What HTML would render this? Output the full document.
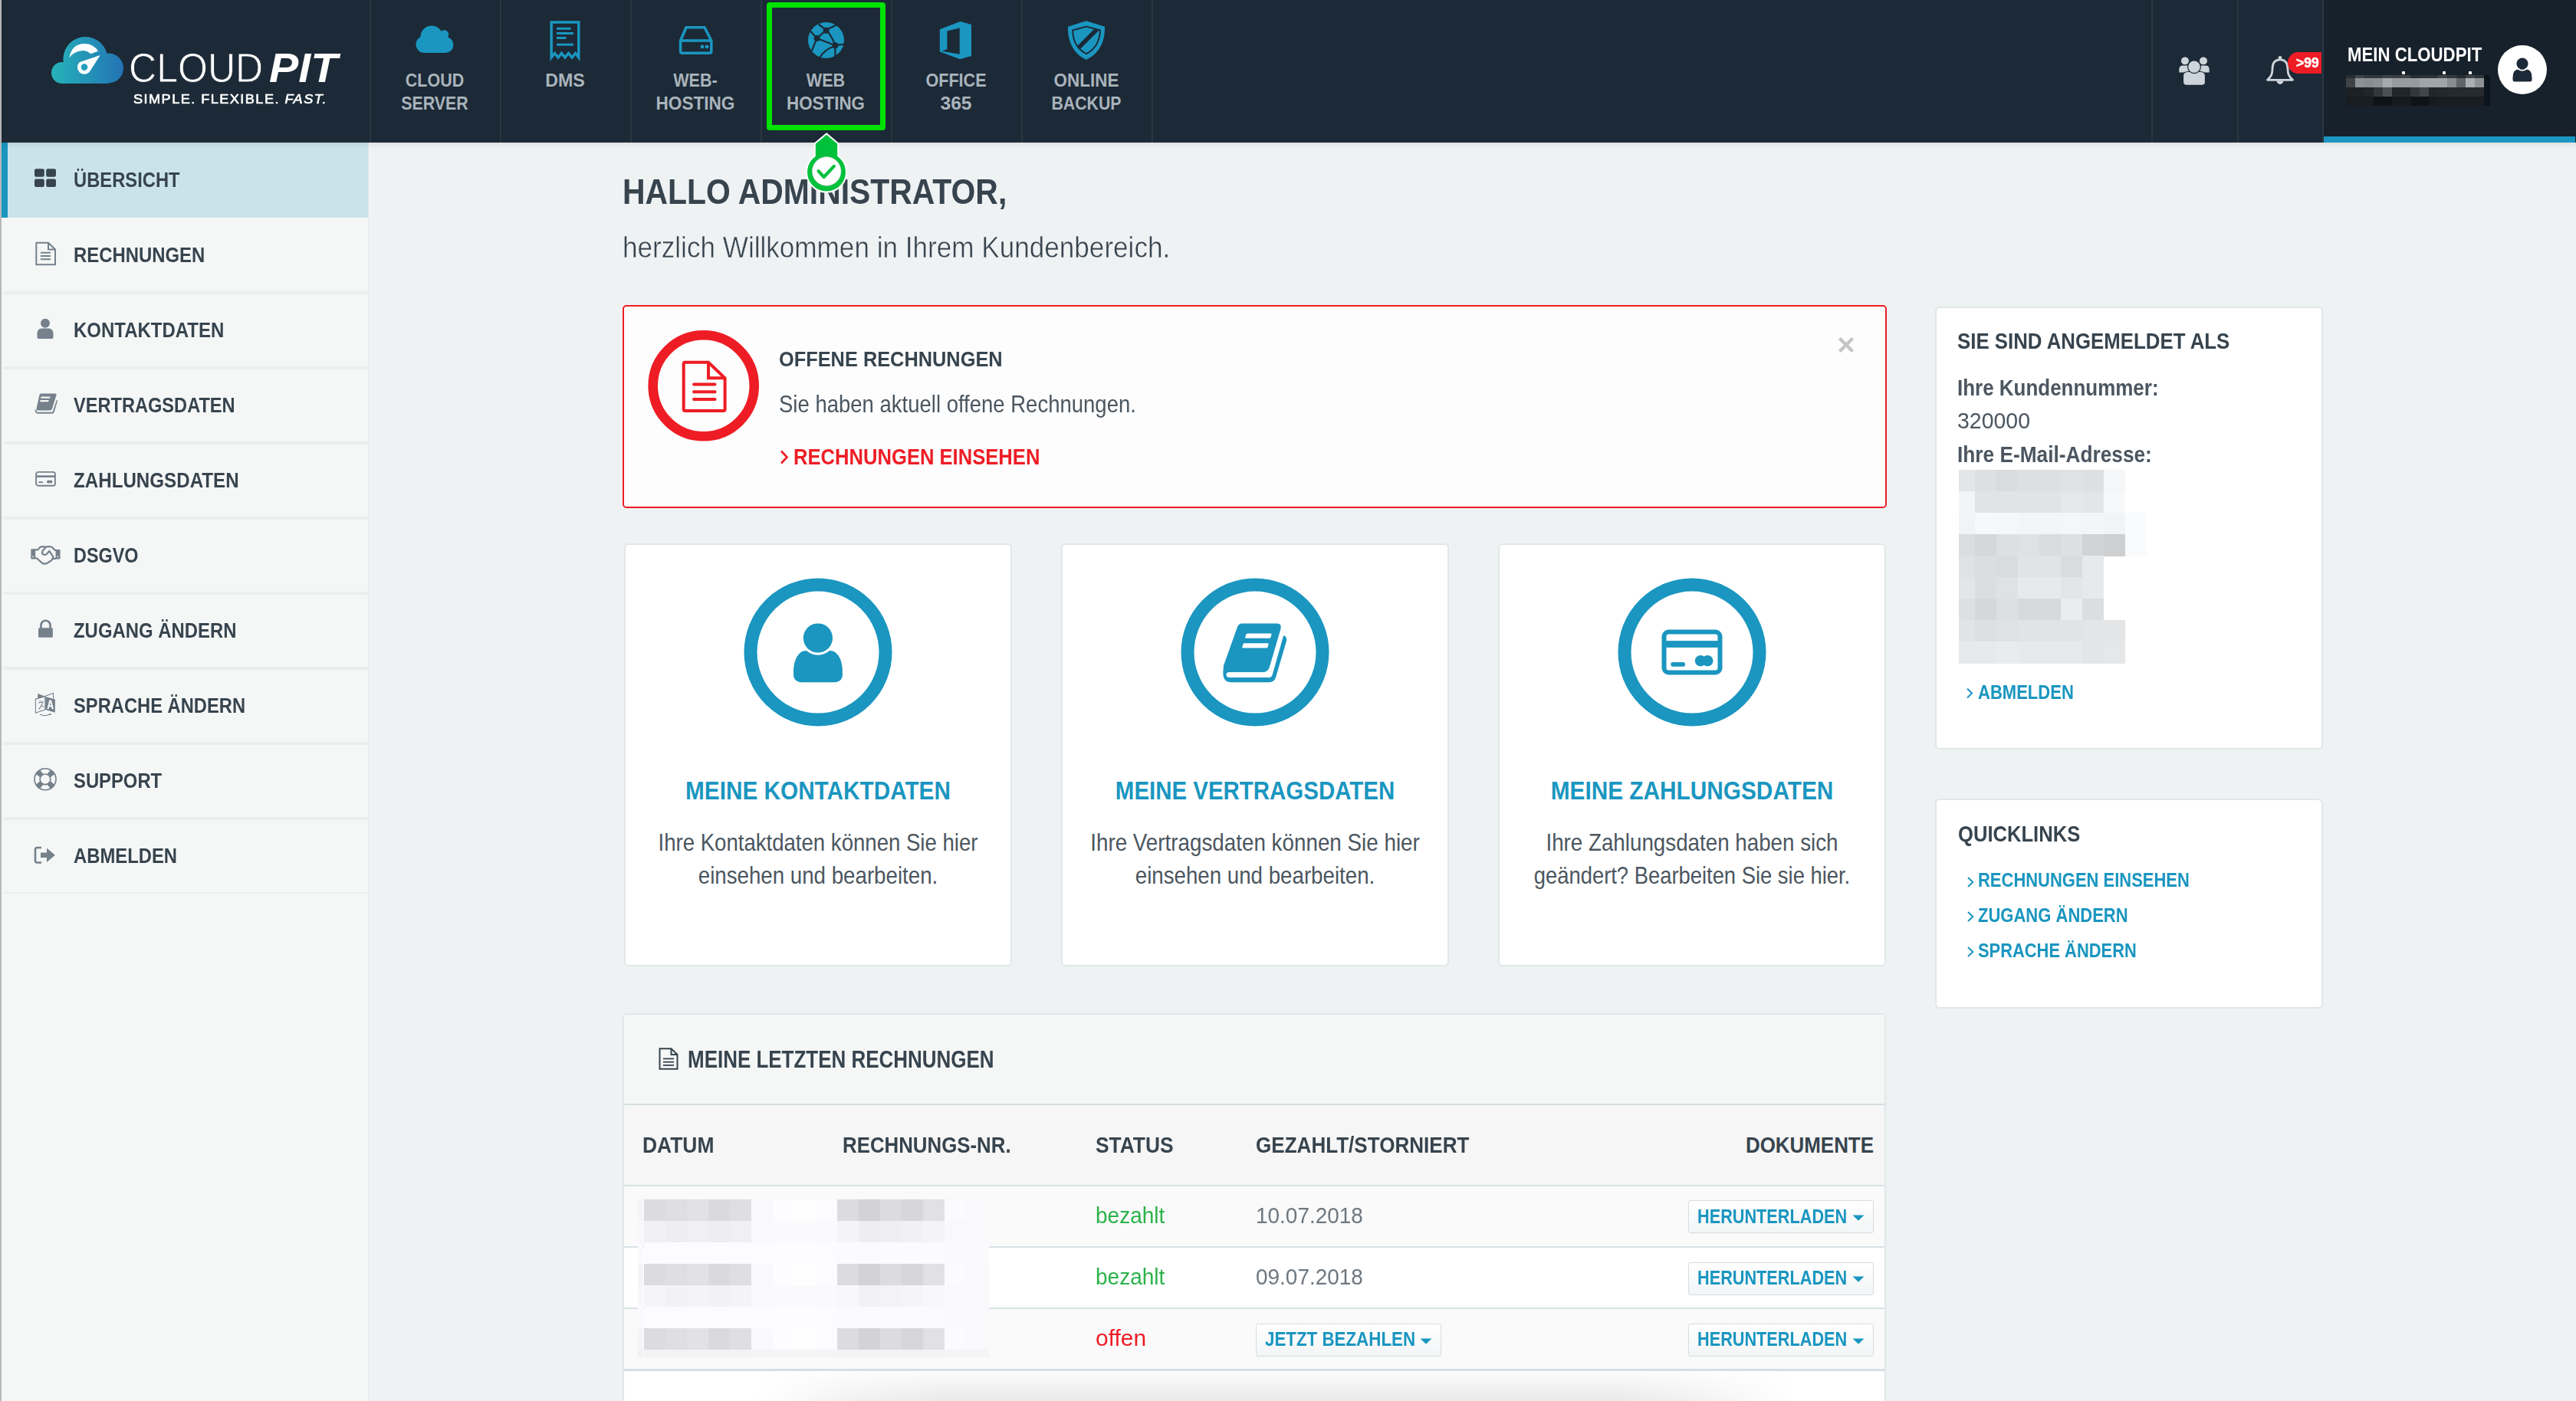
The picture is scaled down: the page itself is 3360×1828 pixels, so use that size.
<!DOCTYPE html><html><head><meta charset="utf-8"><style>
html,body{margin:0;padding:0}
body{width:3360px;height:1828px;overflow:hidden;position:relative;background:#eff2f3;font-family:"Liberation Sans",sans-serif}
.t{position:absolute;white-space:nowrap;line-height:1}
.t span{display:inline-block}
</style></head><body>
<div style="position:absolute;left:0px;top:0px;width:3360px;height:186px;background:#1c2936"></div>
<div style="position:absolute;left:3030px;top:0px;width:330px;height:186px;background:#17212b"></div>
<div style="position:absolute;left:3030px;top:178px;width:329px;height:8px;background:#1a96c0"></div>
<div style="position:absolute;left:482px;top:0px;width:2px;height:186px;background:#2a3641"></div>
<div style="position:absolute;left:652px;top:0px;width:2px;height:186px;background:#2a3641"></div>
<div style="position:absolute;left:822px;top:0px;width:2px;height:186px;background:#2a3641"></div>
<div style="position:absolute;left:992px;top:0px;width:2px;height:186px;background:#2a3641"></div>
<div style="position:absolute;left:1162px;top:0px;width:2px;height:186px;background:#2a3641"></div>
<div style="position:absolute;left:1332px;top:0px;width:2px;height:186px;background:#2a3641"></div>
<div style="position:absolute;left:1502px;top:0px;width:2px;height:186px;background:#2a3641"></div>
<div style="position:absolute;left:2806px;top:0px;width:2px;height:186px;background:#2a3641"></div>
<div style="position:absolute;left:2918px;top:0px;width:2px;height:186px;background:#2a3641"></div>
<div style="position:absolute;left:3029px;top:0px;width:2px;height:186px;background:#2a3641"></div>
<svg style="position:absolute;left:60px;top:40px" width="110" height="75" viewBox="0 0 110 75"><defs><linearGradient id="lg" gradientUnits="userSpaceOnUse" x1="7" y1="0" x2="101" y2="0"><stop offset="0" stop-color="#25b3ba"/><stop offset="1" stop-color="#2373b4"/></linearGradient></defs>
<g fill="url(#lg)"><circle cx="21" cy="55" r="14"/><circle cx="51.4" cy="37" r="29"/><circle cx="81.5" cy="49" r="19.5"/><rect x="21" y="45" width="60.5" height="24"/></g>
<path d="M30.2,35.3 Q34,17 50,17 Q62,17 68,26.8 L58.5,30.2 Q52,25 46,26.2 Q36,27.5 30.2,35.3 Z" fill="#fff"/>
<path d="M70.7,32.1 L56.7,54 A9.1,9.1 0 1 1 43.5,41.2 Z" fill="#fff"/>
<circle cx="50" cy="47.6" r="4.3" fill="#239fbd"/></svg>
<div class="t" style="left:168.00px;top:61.49px;font-size:54.00px;font-weight:normal;color:#ffffff;-webkit-text-stroke:0.9px #1c2936;"><span id="t1" style="transform:scaleX(0.9271);transform-origin:0 0">CLOUD</span></div>
<div class="t" style="left:351.00px;top:61.49px;font-size:54.00px;font-weight:bold;color:#ffffff;"><span id="t2" style="transform:scaleX(1.0624);transform-origin:0 0"><i>PIT</i></span></div>
<div class="t" style="left:174.00px;top:121.43px;font-size:16.50px;font-weight:normal;color:#ffffff;letter-spacing:1.3px;-webkit-text-stroke:0.6px #fff;"><span id="t3" style="transform:scaleX(1.1010);transform-origin:0 0">SIMPLE. FLEXIBLE. <i>FAST.</i></span></div>
<div class="t" style="left:567.00px;top:93.06px;width:0;font-size:24.50px;font-weight:bold;color:#a9b4bc;"><span id="t4" style="transform:scaleX(0.8759) translateX(-50%);transform-origin:0 0">CLOUD</span></div>
<div class="t" style="left:567.00px;top:123.26px;width:0;font-size:24.50px;font-weight:bold;color:#a9b4bc;"><span id="t5" style="transform:scaleX(0.8719) translateX(-50%);transform-origin:0 0">SERVER</span></div>
<div class="t" style="left:737.00px;top:93.06px;width:0;font-size:24.50px;font-weight:bold;color:#a9b4bc;"><span id="t6" style="transform:scaleX(0.9491) translateX(-50%);transform-origin:0 0">DMS</span></div>
<div class="t" style="left:907.00px;top:93.06px;width:0;font-size:24.50px;font-weight:bold;color:#a9b4bc;"><span id="t7" style="transform:scaleX(0.8804) translateX(-50%);transform-origin:0 0">WEB-</span></div>
<div class="t" style="left:907.00px;top:123.26px;width:0;font-size:24.50px;font-weight:bold;color:#a9b4bc;"><span id="t8" style="transform:scaleX(0.9216) translateX(-50%);transform-origin:0 0">HOSTING</span></div>
<div class="t" style="left:1077.00px;top:93.06px;width:0;font-size:24.50px;font-weight:bold;color:#a9b4bc;"><span id="t9" style="transform:scaleX(0.8800) translateX(-50%);transform-origin:0 0">WEB</span></div>
<div class="t" style="left:1077.00px;top:123.26px;width:0;font-size:24.50px;font-weight:bold;color:#a9b4bc;"><span id="t10" style="transform:scaleX(0.9126) translateX(-50%);transform-origin:0 0">HOSTING</span></div>
<div class="t" style="left:1247.00px;top:93.06px;width:0;font-size:24.50px;font-weight:bold;color:#a9b4bc;"><span id="t11" style="transform:scaleX(0.8804) translateX(-50%);transform-origin:0 0">OFFICE</span></div>
<div class="t" style="left:1247.00px;top:123.26px;width:0;font-size:24.50px;font-weight:bold;color:#a9b4bc;"><span id="t12" style="transform:scaleX(1.0040) translateX(-50%);transform-origin:0 0">365</span></div>
<div class="t" style="left:1417.00px;top:93.06px;width:0;font-size:24.50px;font-weight:bold;color:#a9b4bc;"><span id="t13" style="transform:scaleX(0.9156) translateX(-50%);transform-origin:0 0">ONLINE</span></div>
<div class="t" style="left:1417.00px;top:123.26px;width:0;font-size:24.50px;font-weight:bold;color:#a9b4bc;"><span id="t14" style="transform:scaleX(0.8682) translateX(-50%);transform-origin:0 0">BACKUP</span></div>
<svg style="position:absolute;left:540px;top:30px" width="55" height="42" viewBox="0 0 55 42"><g fill="#1a96c0"><circle cx="23" cy="18" r="14.5"/><circle cx="39.5" cy="15" r="5.8"/><circle cx="13.5" cy="28" r="11"/><circle cx="41" cy="28.5" r="10.5"/><rect x="13.5" y="20" width="27.5" height="19"/></g></svg>
<svg style="position:absolute;left:715px;top:25px" width="45" height="56" viewBox="0 0 45 56"><g fill="none" stroke="#1a96c0" stroke-width="3.5"><path d="M4.2,50 L4.2,4 L39.8,4 L39.8,50 L35.5,44.5 L31,50 L26.5,44.5 L22,50 L17.5,44.5 L13,50 L8.5,44.5 Z"/></g><g fill="#1a96c0"><rect x="11" y="10.8" width="18.5" height="3"/><rect x="11" y="17" width="22" height="3"/><rect x="11" y="23" width="12.5" height="3"/><rect x="11" y="31.7" width="22" height="3"/></g></svg>
<svg style="position:absolute;left:883px;top:31px" width="50" height="44" viewBox="0 0 50 44"><g fill="none" stroke="#1a96c0" stroke-width="3.6" stroke-linejoin="round"><path d="M12,4.8 L36,4.8 L44.8,22 L44.8,36 Q44.8,38.3 42.5,38.3 L6.9,38.3 Q4.6,38.3 4.6,36 L4.6,22 Z"/><path d="M4.6,22 L44.8,22"/></g><g fill="#1a96c0"><circle cx="33" cy="30" r="2.4"/><circle cx="39" cy="30" r="2.4"/></g></svg>
<svg style="position:absolute;left:1050px;top:26px" width="54" height="54" viewBox="0 0 54 54"><circle cx="27.5" cy="26.5" r="23.5" fill="#1a96c0"/><g fill="none" stroke="#1c2936" stroke-width="2.2" stroke-linejoin="round"><path d="M17.5,5.5 L27.6,13.1 L41,6.5"/><path d="M27.6,13.1 L15.6,23.9 L6.5,14"/><path d="M15.6,23.9 L8.5,41"/><path d="M15.6,23.9 L39.4,33.2 L52,31.5"/><path d="M27.6,13.1 Q35,21 39.4,33.2 L39.4,51"/><path d="M38,34.5 Q26,38 18.5,50"/></g><g fill="#1c2936"><circle cx="27.6" cy="13.8" r="4"/><circle cx="15.6" cy="23.9" r="4"/><circle cx="39.4" cy="33.2" r="4"/></g></svg>
<svg style="position:absolute;left:1222px;top:25px" width="50" height="56" viewBox="0 0 50 56"><path fill="#1a96c0" d="M3.8,13.2 L30.6,3 L45,7 L45,47.9 L30.2,52.3 L3.8,42.6 Z"/><path fill="#1c2936" d="M13.4,15.4 L29.7,11.4 L29.7,45.7 L6.7,41.7 L13.4,39 Z"/></svg>
<svg style="position:absolute;left:1389px;top:24px" width="56" height="58" viewBox="0 0 56 58"><defs><clipPath id="shc"><path d="M27.9,10.6 L46,15.5 C45.5,30 40,40 27.9,46.2 C15.8,40 10.4,30 10.2,15.5 Z"/></clipPath></defs><path fill="#1a96c0" d="M27.8,3.2 L52,10.8 C52.5,30 45,46 27.8,54 C10.6,46 3.5,30 4,10.8 Z"/><path fill="none" stroke="#1c2936" stroke-width="1.9" stroke-linejoin="round" d="M27.9,10.6 L46,15.5 C45.5,30 40,40 27.9,46.2 C15.8,40 10.4,30 10.2,15.5 Z"/><path clip-path="url(#shc)" stroke="#1c2936" stroke-width="5.6" d="M47.3,8.8 L11.3,44.8"/></svg>
<svg style="position:absolute;left:2838px;top:70px" width="48" height="46" viewBox="0 0 48 46"><g fill="#cdd4da" stroke="#1c2936" stroke-width="1.2">
<circle cx="12" cy="9.4" r="5.6"/><circle cx="36" cy="9.4" r="5.6"/>
<path d="M3.8,20 Q4,14.8 9,14.8 L15,14.8 Q20,14.8 20,20 L20,25 L3.8,25 Q3.6,22 3.8,20 Z"/>
<path d="M28,20 Q28,14.8 33,14.8 L39,14.8 Q44,14.8 44.2,20 Q44.4,22 44.2,25 L28,25 Z"/>
<path d="M9.5,29 Q9.5,23.5 16,23.5 L32,23.5 Q38.5,23.5 38.5,29 L38.5,37 Q38.5,41.4 34,41.4 L14,41.4 Q9.5,41.4 9.5,37 Z"/>
<circle cx="24" cy="17.2" r="8.4"/></g></svg>
<svg style="position:absolute;left:2952px;top:70px" width="44" height="46" viewBox="0 0 44 46"><g fill="none" stroke="#cdd4da" stroke-width="2.8" stroke-linejoin="round"><path d="M22,7.8 C14.5,7.8 12,13 12,20 C12,26.5 10.5,29.5 5.5,34.3 L38.5,34.3 C33.5,29.5 32,26.5 32,20 C32,13 29.5,7.8 22,7.8 Z"/></g><path d="M17.6,35.5 A4.4,4.4 0 0 0 26.4,35.5 Z" fill="#cdd4da"/><circle cx="22" cy="5.3" r="2.3" fill="#cdd4da"/></svg>
<div style="position:absolute;left:2984px;top:67.8px;width:44px;height:28.2px;background:#ee1d25;border-radius:14px 0 0 14px;overflow:hidden"><div style="position:absolute;left:10.6px;top:4.2px;font-size:19px;font-weight:bold;color:#fff;line-height:1;white-space:nowrap;-webkit-text-stroke:0.5px #fff;transform:scaleX(0.92);transform-origin:0 0">&gt;99</div></div>
<div class="t" style="left:3061.60px;top:58.58px;font-size:25.30px;font-weight:bold;color:#ffffff;"><span id="t15" style="transform:scaleX(0.8779);transform-origin:0 0">MEIN CLOUDPIT</span></div>
<div style="position:absolute;left:3060px;top:97.8px;width:12px;height:3.8px;background:rgb(40,45,50)"></div>
<div style="position:absolute;left:3060px;top:101.6px;width:12px;height:12.4px;background:rgb(62,67,72)"></div>
<div style="position:absolute;left:3060px;top:114px;width:12px;height:12px;background:rgb(28,33,38)"></div>
<div style="position:absolute;left:3060px;top:126px;width:12px;height:12px;background:rgb(24,29,34)"></div>
<div style="position:absolute;left:3072px;top:97.8px;width:12px;height:3.8px;background:rgb(62,67,72)"></div>
<div style="position:absolute;left:3072px;top:101.6px;width:12px;height:12.4px;background:rgb(140,145,150)"></div>
<div style="position:absolute;left:3072px;top:114px;width:12px;height:12px;background:rgb(28,33,38)"></div>
<div style="position:absolute;left:3072px;top:126px;width:12px;height:12px;background:rgb(24,29,34)"></div>
<div style="position:absolute;left:3084px;top:97.8px;width:12px;height:3.8px;background:rgb(50,55,60)"></div>
<div style="position:absolute;left:3084px;top:101.6px;width:12px;height:12.4px;background:rgb(135,140,145)"></div>
<div style="position:absolute;left:3084px;top:114px;width:12px;height:12px;background:rgb(33,38,43)"></div>
<div style="position:absolute;left:3084px;top:126px;width:12px;height:12px;background:rgb(24,29,34)"></div>
<div style="position:absolute;left:3096px;top:97.8px;width:12px;height:3.8px;background:rgb(50,55,60)"></div>
<div style="position:absolute;left:3096px;top:101.6px;width:12px;height:12.4px;background:rgb(140,145,150)"></div>
<div style="position:absolute;left:3096px;top:114px;width:12px;height:12px;background:rgb(50,55,60)"></div>
<div style="position:absolute;left:3096px;top:126px;width:12px;height:12px;background:rgb(14,19,24)"></div>
<div style="position:absolute;left:3108px;top:97.8px;width:12px;height:3.8px;background:rgb(62,67,72)"></div>
<div style="position:absolute;left:3108px;top:101.6px;width:12px;height:12.4px;background:rgb(165,170,175)"></div>
<div style="position:absolute;left:3108px;top:114px;width:12px;height:12px;background:rgb(75,80,85)"></div>
<div style="position:absolute;left:3108px;top:126px;width:12px;height:12px;background:rgb(14,19,24)"></div>
<div style="position:absolute;left:3120px;top:97.8px;width:12px;height:3.8px;background:rgb(58,63,68)"></div>
<div style="position:absolute;left:3120px;top:101.6px;width:12px;height:12.4px;background:rgb(150,155,160)"></div>
<div style="position:absolute;left:3120px;top:114px;width:12px;height:12px;background:rgb(33,38,43)"></div>
<div style="position:absolute;left:3120px;top:126px;width:12px;height:12px;background:rgb(22,27,32)"></div>
<div style="position:absolute;left:3132px;top:97.8px;width:12px;height:3.8px;background:rgb(62,67,72)"></div>
<div style="position:absolute;left:3132px;top:101.6px;width:12px;height:12.4px;background:rgb(150,155,160)"></div>
<div style="position:absolute;left:3132px;top:114px;width:12px;height:12px;background:rgb(33,38,43)"></div>
<div style="position:absolute;left:3132px;top:126px;width:12px;height:12px;background:rgb(22,27,32)"></div>
<div style="position:absolute;left:3144px;top:97.8px;width:12px;height:3.8px;background:rgb(40,45,50)"></div>
<div style="position:absolute;left:3144px;top:101.6px;width:12px;height:12.4px;background:rgb(150,155,160)"></div>
<div style="position:absolute;left:3144px;top:114px;width:12px;height:12px;background:rgb(50,55,60)"></div>
<div style="position:absolute;left:3144px;top:126px;width:12px;height:12px;background:rgb(14,19,24)"></div>
<div style="position:absolute;left:3156px;top:97.8px;width:12px;height:3.8px;background:rgb(44,49,54)"></div>
<div style="position:absolute;left:3156px;top:101.6px;width:12px;height:12.4px;background:rgb(160,165,170)"></div>
<div style="position:absolute;left:3156px;top:114px;width:12px;height:12px;background:rgb(65,70,75)"></div>
<div style="position:absolute;left:3156px;top:126px;width:12px;height:12px;background:rgb(14,19,24)"></div>
<div style="position:absolute;left:3168px;top:97.8px;width:12px;height:3.8px;background:rgb(44,49,54)"></div>
<div style="position:absolute;left:3168px;top:101.6px;width:12px;height:12.4px;background:rgb(160,165,170)"></div>
<div style="position:absolute;left:3168px;top:114px;width:12px;height:12px;background:rgb(33,38,43)"></div>
<div style="position:absolute;left:3168px;top:126px;width:12px;height:12px;background:rgb(22,27,32)"></div>
<div style="position:absolute;left:3180px;top:97.8px;width:12px;height:3.8px;background:rgb(62,67,72)"></div>
<div style="position:absolute;left:3180px;top:101.6px;width:12px;height:12.4px;background:rgb(160,165,170)"></div>
<div style="position:absolute;left:3180px;top:114px;width:12px;height:12px;background:rgb(35,40,45)"></div>
<div style="position:absolute;left:3180px;top:126px;width:12px;height:12px;background:rgb(24,29,34)"></div>
<div style="position:absolute;left:3192px;top:97.8px;width:12px;height:3.8px;background:rgb(50,55,60)"></div>
<div style="position:absolute;left:3192px;top:101.6px;width:12px;height:12.4px;background:rgb(135,140,145)"></div>
<div style="position:absolute;left:3192px;top:114px;width:12px;height:12px;background:rgb(37,42,47)"></div>
<div style="position:absolute;left:3192px;top:126px;width:12px;height:12px;background:rgb(24,29,34)"></div>
<div style="position:absolute;left:3204px;top:97.8px;width:12px;height:3.8px;background:rgb(40,45,50)"></div>
<div style="position:absolute;left:3204px;top:101.6px;width:12px;height:12.4px;background:rgb(95,100,105)"></div>
<div style="position:absolute;left:3204px;top:114px;width:12px;height:12px;background:rgb(37,42,47)"></div>
<div style="position:absolute;left:3204px;top:126px;width:12px;height:12px;background:rgb(24,29,34)"></div>
<div style="position:absolute;left:3216px;top:97.8px;width:12px;height:3.8px;background:rgb(62,67,72)"></div>
<div style="position:absolute;left:3216px;top:101.6px;width:12px;height:12.4px;background:rgb(170,175,180)"></div>
<div style="position:absolute;left:3216px;top:114px;width:12px;height:12px;background:rgb(37,42,47)"></div>
<div style="position:absolute;left:3216px;top:126px;width:12px;height:12px;background:rgb(24,29,34)"></div>
<div style="position:absolute;left:3228px;top:97.8px;width:12px;height:3.8px;background:rgb(50,55,60)"></div>
<div style="position:absolute;left:3228px;top:101.6px;width:12px;height:12.4px;background:rgb(140,145,150)"></div>
<div style="position:absolute;left:3228px;top:114px;width:12px;height:12px;background:rgb(37,42,47)"></div>
<div style="position:absolute;left:3228px;top:126px;width:12px;height:12px;background:rgb(24,29,34)"></div>
<div style="position:absolute;left:3240px;top:97.8px;width:8px;height:40px;background:#0c141d"></div>
<div style="position:absolute;left:3132.5px;top:93px;width:4px;height:4px;background:#fff;border-radius:1px"></div>
<div style="position:absolute;left:3186px;top:93px;width:4px;height:4px;background:#fff;border-radius:1px"></div>
<div style="position:absolute;left:3219.5px;top:93px;width:4px;height:4px;background:#fff;border-radius:1px"></div>
<svg style="position:absolute;left:3258px;top:59px" width="64" height="64" viewBox="0 0 64 64"><circle cx="32" cy="32" r="32" fill="#fff"/><circle cx="32" cy="24" r="7.6" fill="#1c2936"/><path fill="#1c2936" d="M19.5,42 Q19.5,31.5 27,31.5 L37,31.5 Q44.5,31.5 44.5,42 L44.5,45 Q44.5,47.5 42,47.5 L22,47.5 Q19.5,47.5 19.5,45 Z"/><circle cx="32" cy="24" r="9" fill="none" stroke="#fff" stroke-width="1.4"/></svg>
<div style="position:absolute;left:0px;top:186px;width:480px;height:1642px;background:#f5f7f7"></div>
<div style="position:absolute;left:480px;top:186px;width:1px;height:1642px;background:#e1e6e8"></div>
<div style="position:absolute;left:0px;top:0px;width:2px;height:1828px;background:#b9b9b9"></div>
<div style="position:absolute;left:2px;top:186px;width:478px;height:98px;background:#cae3ea"></div>
<div style="position:absolute;left:2px;top:186px;width:8px;height:98px;background:#1a96c0"></div>
<div style="position:absolute;left:4px;top:380px;width:476px;height:4px;background:#ebeeed"></div>
<div style="position:absolute;left:4px;top:478px;width:476px;height:4px;background:#ebeeed"></div>
<div style="position:absolute;left:4px;top:576px;width:476px;height:4px;background:#ebeeed"></div>
<div style="position:absolute;left:4px;top:674px;width:476px;height:4px;background:#ebeeed"></div>
<div style="position:absolute;left:4px;top:772px;width:476px;height:4px;background:#ebeeed"></div>
<div style="position:absolute;left:4px;top:870px;width:476px;height:4px;background:#ebeeed"></div>
<div style="position:absolute;left:4px;top:968px;width:476px;height:4px;background:#ebeeed"></div>
<div style="position:absolute;left:4px;top:1066px;width:476px;height:4px;background:#ebeeed"></div>
<div style="position:absolute;left:4px;top:1164px;width:476px;height:2px;background:#edf0f0"></div>
<div style="position:absolute;left:2px;top:186px;width:3358px;height:8px;background:linear-gradient(rgba(0,0,0,0.07),rgba(0,0,0,0))"></div>
<div class="t" style="left:95.50px;top:220.72px;font-size:27.50px;font-weight:bold;color:#37444e;"><span id="t16" style="transform:scaleX(0.8636);transform-origin:0 0">ÜBERSICHT</span></div>
<div class="t" style="left:95.50px;top:318.72px;font-size:27.50px;font-weight:bold;color:#37444e;"><span id="t17" style="transform:scaleX(0.8693);transform-origin:0 0">RECHNUNGEN</span></div>
<div class="t" style="left:95.50px;top:416.72px;font-size:27.50px;font-weight:bold;color:#37444e;"><span id="t18" style="transform:scaleX(0.8719);transform-origin:0 0">KONTAKTDATEN</span></div>
<div class="t" style="left:95.50px;top:514.72px;font-size:27.50px;font-weight:bold;color:#37444e;"><span id="t19" style="transform:scaleX(0.8581);transform-origin:0 0">VERTRAGSDATEN</span></div>
<div class="t" style="left:95.50px;top:612.72px;font-size:27.50px;font-weight:bold;color:#37444e;"><span id="t20" style="transform:scaleX(0.8784);transform-origin:0 0">ZAHLUNGSDATEN</span></div>
<div class="t" style="left:95.50px;top:710.72px;font-size:27.50px;font-weight:bold;color:#37444e;"><span id="t21" style="transform:scaleX(0.8509);transform-origin:0 0">DSGVO</span></div>
<div class="t" style="left:95.50px;top:808.72px;font-size:27.50px;font-weight:bold;color:#37444e;"><span id="t22" style="transform:scaleX(0.8696);transform-origin:0 0">ZUGANG ÄNDERN</span></div>
<div class="t" style="left:95.50px;top:906.72px;font-size:27.50px;font-weight:bold;color:#37444e;"><span id="t23" style="transform:scaleX(0.8624);transform-origin:0 0">SPRACHE ÄNDERN</span></div>
<div class="t" style="left:95.50px;top:1004.72px;font-size:27.50px;font-weight:bold;color:#37444e;"><span id="t24" style="transform:scaleX(0.8660);transform-origin:0 0">SUPPORT</span></div>
<div class="t" style="left:95.50px;top:1102.72px;font-size:27.50px;font-weight:bold;color:#37444e;"><span id="t25" style="transform:scaleX(0.8669);transform-origin:0 0">ABMELDEN</span></div>
<svg style="position:absolute;left:44px;top:219px" width="30" height="26" viewBox="0 0 30 26"><g fill="#37444e"><rect x="1" y="1.3" width="12.8" height="10.5" rx="2.2"/><rect x="16.2" y="1.3" width="12.8" height="10.5" rx="2.2"/><rect x="1" y="14.5" width="12.8" height="10.5" rx="2.2"/><rect x="16.2" y="14.5" width="12.8" height="10.5" rx="2.2"/></g></svg>
<svg style="position:absolute;left:44px;top:314px" width="32" height="34" viewBox="0 0 32 34"><g fill="none" stroke="#75818b" stroke-width="2" stroke-linejoin="round"><path d="M3.3,2.7 L19,2.7 L28,11.5 L28,31.3 L3.3,31.3 Z"/><path d="M19,2.7 L19,11.5 L28,11.5"/></g><g stroke="#75818b" stroke-width="1.9" stroke-linecap="round"><path d="M9.6,15.8 L21.3,15.8"/><path d="M9.6,20 L21.3,20"/><path d="M9.6,24.3 L21.3,24.3"/></g></svg>
<svg style="position:absolute;left:46px;top:414px" width="26" height="30" viewBox="0 0 26 30"><g fill="#75818b"><circle cx="13" cy="7.8" r="6"/><path d="M2.5,22 Q2.5,14.5 8.5,14.5 L17.5,14.5 Q23.5,14.5 23.5,22 L23.5,26 Q23.5,28 21.5,28 L4.5,28 Q2.5,28 2.5,26 Z"/></g></svg>
<svg style="position:absolute;left:44px;top:512px" width="32" height="30" viewBox="0 0 32 30"><g fill="#75818b"><path d="M9,1.5 L28,1.5 Q30,1.5 29.5,3.5 L24,21.5 Q23.3,23.5 21,23.5 L5,23.5 Q3,23.5 3.5,21.5 L7.5,3 Q8,1.5 9,1.5 Z"/><path d="M1.8,22 Q1,27.5 5.5,27.8 L24,27.8 Q26,27.8 26.8,25.5 L31,11 L30,9.5 L25,24.5 Q24.6,25.8 23,25.8 L5,25.8 Q3.2,25.8 3.5,23.5 Z"/></g><g fill="#f5f7f7"><rect x="11.5" y="5.5" width="12" height="2.2" transform="skewX(-18)" /><rect x="12" y="10" width="11" height="2.2" transform="skewX(-18)"/></g></svg>
<svg style="position:absolute;left:44px;top:612px" width="32" height="26" viewBox="0 0 32 26"><rect x="3.1" y="3.9" width="24.8" height="17.8" rx="2.8" fill="none" stroke="#75818b" stroke-width="1.9"/><rect x="3" y="8.3" width="25" height="2.6" fill="#75818b"/><rect x="6.3" y="16.3" width="5.8" height="1.8" fill="#75818b"/><circle cx="19.1" cy="16.6" r="2.1" fill="#75818b"/><circle cx="22.3" cy="16.6" r="2.1" fill="#75818b"/></svg>
<svg style="position:absolute;left:39px;top:706px" width="42" height="32" viewBox="0 0 42 32"><g fill="#75818b"><rect x="1.3" y="10.3" width="5.9" height="13.1" rx="0.8"/><rect x="33.6" y="11" width="5.9" height="12.6" rx="0.8"/></g><g fill="#f5f7f7"><circle cx="4.1" cy="20.3" r="0.9"/><circle cx="36.4" cy="20.3" r="0.9"/></g><g fill="none" stroke="#75818b" stroke-width="2.2" stroke-linejoin="round" stroke-linecap="round"><path d="M7,11.4 L10,11.4 L13,8.2 Q15,7.1 18,7.2 L20.2,7.8 Q22.5,7 25.5,7.1 Q28,7.2 29.5,8.5 L32.5,11.8 L33.6,11.8"/><path d="M20.6,8 L16.5,13 Q15,16.5 18,17.8 Q20.5,18.6 22.5,16.3 L25.3,13 L30,19.8 Q31,22 29,23.3"/><path d="M7.2,22.3 L9,22.3 L16,28.8 Q19,30.3 22.5,28.8 L26,26.5 Q28,25.6 29,24 L30.5,22.8 L33.6,22.8"/></g></svg>
<svg style="position:absolute;left:46px;top:806px" width="28" height="30" viewBox="0 0 28 30"><path d="M7.45,14 L7.45,9.8 A6.05,6.05 0 0 1 19.55,9.8 L19.55,14" fill="none" stroke="#75818b" stroke-width="2.7"/><rect x="4" y="13.2" width="18.9" height="12.6" rx="1.6" fill="#75818b"/></svg>
<svg style="position:absolute;left:44px;top:903px" width="32" height="34" viewBox="0 0 32 34"><g fill="#75818b"><path d="M5.2,2 L14.8,5.4 L5.2,8.2 Z"/><path d="M15.2,5.9 L27.9,9.5 L27.9,26.8 L15.2,23 Z"/></g><g fill="none" stroke="#75818b" stroke-width="1.1" stroke-linejoin="round"><path d="M2.4,9.1 L14.8,5.6 L14.8,23 L2.4,27.3 Z"/><path d="M15.2,5.2 L25.5,1.3 L25.5,8.4"/><path d="M8.1,29.1 Q14.8,32.5 22.3,28.6"/><path d="M7.3,11.5 L9,11.5 M6,14.2 L12.5,12.4 M11.8,12.6 Q10,19 6.5,22.6 M9.5,17.3 L13.3,19.6"/></g><path d="M21,27.2 L23.2,29.5 L20.6,29.9 Z" fill="#75818b"/><path fill="#f5f7f7" d="M20.3,10.6 L23,10.6 L26,22 L23.6,22 L23,19.3 L20.3,19.3 L19.7,22 L17.5,22 Z M21.6,13.3 L20.8,17.3 L22.6,17.3 Z"/></svg>
<svg style="position:absolute;left:43px;top:1000px" width="34" height="34" viewBox="0 0 34 34"><circle cx="16" cy="16.8" r="14.8" fill="#75818b"/><path fill="#f5f7f7" d="M27.46,10.45 A13.10,13.10 0 0 1 27.46,23.15 L23.10,19.52 A7.60,7.60 0 0 0 23.10,14.08 Z M22.35,28.26 A13.10,13.10 0 0 1 9.65,28.26 L13.28,23.90 A7.60,7.60 0 0 0 18.72,23.90 Z M4.54,23.15 A13.10,13.10 0 0 1 4.54,10.45 L8.90,14.08 A7.60,7.60 0 0 0 8.90,19.52 Z M9.65,5.34 A13.10,13.10 0 0 1 22.35,5.34 L18.72,9.70 A7.60,7.60 0 0 0 13.28,9.70 Z"/><circle cx="16" cy="16.8" r="6" fill="#f5f7f7"/></svg>
<svg style="position:absolute;left:44px;top:1103px" width="30" height="26" viewBox="0 0 30 26"><path d="M10,3 L4.5,3 Q2,3 2,5.5 L2,20 Q2,22.5 4.5,22.5 L10,22.5" fill="none" stroke="#75818b" stroke-width="2.6"/><path fill="#75818b" d="M9,9.5 L17,9.5 L17,3.5 L27.8,12.8 L17,22 L17,16 L9,16 Z"/></svg>
<div class="t" style="left:812.30px;top:226.01px;font-size:47.00px;font-weight:bold;color:#37444e;"><span id="t26" style="transform:scaleX(0.8700);transform-origin:0 0">HALLO ADMINISTRATOR,</span></div>
<div class="t" style="left:812.00px;top:303.83px;font-size:38.00px;font-weight:normal;color:#37444e;-webkit-text-stroke:0.5px #eff2f3;"><span id="t27" style="transform:scaleX(0.9240);transform-origin:0 0">herzlich Willkommen in Ihrem Kundenbereich.</span></div>
<div style="position:absolute;left:812px;top:398px;width:1645px;height:261px;border:2px solid #ee1d25;border-radius:5px;background:#fdfdfd"></div>
<svg style="position:absolute;left:840px;top:426px" width="156" height="156" viewBox="0 0 156 156"><circle cx="77.7" cy="77.3" r="66" fill="none" stroke="#ee1d25" stroke-width="12.6"/><path d="M53.5,46.7 L84,46.7 L105.6,67.3 L105.6,108 Q105.6,110 103.6,110 L53.5,110 Q51.7,110 51.7,108 L51.7,48.5 Q51.7,46.7 53.5,46.7 Z" fill="none" stroke="#ee1d25" stroke-width="4"/><path d="M84,46.7 L84,67.3 L105.6,67.3" fill="none" stroke="#ee1d25" stroke-width="4"/><g stroke="#ee1d25" stroke-width="4" stroke-linecap="round"><path d="M65,75.4 L92.5,75.4"/><path d="M65,85.2 L92.5,85.2"/><path d="M65,95 L92.5,95"/></g></svg>
<div class="t" style="left:1016.40px;top:453.54px;font-size:28.30px;font-weight:bold;color:#37444e;"><span id="t28" style="transform:scaleX(0.8961);transform-origin:0 0">OFFENE RECHNUNGEN</span></div>
<div class="t" style="left:1016.00px;top:512.18px;font-size:30.50px;font-weight:normal;color:#4b5660;"><span id="t29" style="transform:scaleX(0.9017);transform-origin:0 0">Sie haben aktuell offene Rechnungen.</span></div>
<svg style="position:absolute;left:1016px;top:586px" width="14" height="22" viewBox="0 0 14 22"><path d="M3,2.5 L10.5,10.5 L3,18.5" fill="none" stroke="#ee1d25" stroke-width="2.6"/></svg>
<div class="t" style="left:1035.40px;top:581.62px;font-size:28.80px;font-weight:bold;color:#ee1d25;"><span id="t30" style="transform:scaleX(0.8888);transform-origin:0 0">RECHNUNGEN EINSEHEN</span></div>
<svg style="position:absolute;left:2396px;top:438px" width="24" height="24" viewBox="0 0 24 24"><g stroke="#c4c4c4" stroke-width="4.2"><path d="M3.5,3.5 L20.5,20.5"/><path d="M20.5,3.5 L3.5,20.5"/></g></svg>
<div style="position:absolute;left:814px;top:709px;width:502px;height:547.5px;background:#fff;border:2px solid #e2e6e8;border-radius:6px"></div>
<svg style="position:absolute;left:967px;top:751px" width="200" height="200" viewBox="0 0 200 200"><circle cx="100" cy="100" r="88" fill="none" stroke="#1a96c0" stroke-width="17"/></svg>
<div class="t" style="left:1067.00px;top:1015.43px;width:0;font-size:33.40px;font-weight:bold;color:#1a96c0;"><span id="t31" style="transform:scaleX(0.8907) translateX(-50%);transform-origin:0 0">MEINE KONTAKTDATEN</span></div>
<div class="t" style="left:1067.00px;top:1084.38px;width:0;font-size:30.50px;font-weight:normal;color:#4b5660;"><span id="t32" style="transform:scaleX(0.9040) translateX(-50%);transform-origin:0 0">Ihre Kontaktdaten können Sie hier</span></div>
<div class="t" style="left:1067.00px;top:1127.18px;width:0;font-size:30.50px;font-weight:normal;color:#4b5660;"><span id="t33" style="transform:scaleX(0.9078) translateX(-50%);transform-origin:0 0">einsehen und bearbeiten.</span></div>
<div style="position:absolute;left:1384px;top:709px;width:502px;height:547.5px;background:#fff;border:2px solid #e2e6e8;border-radius:6px"></div>
<svg style="position:absolute;left:1537px;top:751px" width="200" height="200" viewBox="0 0 200 200"><circle cx="100" cy="100" r="88" fill="none" stroke="#1a96c0" stroke-width="17"/></svg>
<div class="t" style="left:1637.00px;top:1015.43px;width:0;font-size:33.40px;font-weight:bold;color:#1a96c0;"><span id="t34" style="transform:scaleX(0.8819) translateX(-50%);transform-origin:0 0">MEINE VERTRAGSDATEN</span></div>
<div class="t" style="left:1637.00px;top:1084.38px;width:0;font-size:30.50px;font-weight:normal;color:#4b5660;"><span id="t35" style="transform:scaleX(0.9113) translateX(-50%);transform-origin:0 0">Ihre Vertragsdaten können Sie hier</span></div>
<div class="t" style="left:1637.00px;top:1127.18px;width:0;font-size:30.50px;font-weight:normal;color:#4b5660;"><span id="t36" style="transform:scaleX(0.9078) translateX(-50%);transform-origin:0 0">einsehen und bearbeiten.</span></div>
<div style="position:absolute;left:1954px;top:709px;width:502px;height:547.5px;background:#fff;border:2px solid #e2e6e8;border-radius:6px"></div>
<svg style="position:absolute;left:2107px;top:751px" width="200" height="200" viewBox="0 0 200 200"><circle cx="100" cy="100" r="88" fill="none" stroke="#1a96c0" stroke-width="17"/></svg>
<div class="t" style="left:2207.00px;top:1015.43px;width:0;font-size:33.40px;font-weight:bold;color:#1a96c0;"><span id="t37" style="transform:scaleX(0.8923) translateX(-50%);transform-origin:0 0">MEINE ZAHLUNGSDATEN</span></div>
<div class="t" style="left:2207.00px;top:1084.38px;width:0;font-size:30.50px;font-weight:normal;color:#4b5660;"><span id="t38" style="transform:scaleX(0.9099) translateX(-50%);transform-origin:0 0">Ihre Zahlungsdaten haben sich</span></div>
<div class="t" style="left:2207.00px;top:1127.18px;width:0;font-size:30.50px;font-weight:normal;color:#4b5660;"><span id="t39" style="transform:scaleX(0.8975) translateX(-50%);transform-origin:0 0">geändert? Bearbeiten Sie sie hier.</span></div>
<svg style="position:absolute;left:1030px;top:810px" width="74" height="84" viewBox="0 0 74 84"><path fill="#1a96c0" d="M21.4,38.9 L52.5,38.9 C63,38.9 68.9,52 68.9,66 L68.9,70 C68.9,76 65,80.3 58,80.3 L16,80.3 C9,80.3 5,76 5,70 L5,66 C5,52 11,38.9 21.4,38.9 Z"/><circle cx="36.9" cy="22.5" r="22.3" fill="#fff"/><circle cx="36.9" cy="22.5" r="19.1" fill="#1a96c0"/></svg>
<svg style="position:absolute;left:1590px;top:808px" width="92" height="88" viewBox="0 0 92 88"><path fill="#1a96c0" d="M30,5.6 L76,5.6 Q82,5.6 80.5,12.5 L66,62 Q64,69.1 57,69.1 L14,69.1 Q9,69.1 9.5,73 Q10,75.9 14,75.9 L66,75.9 Q68.5,75.9 69.5,73 L84.2,20.9 Q89,23 88.1,28 L74,76 Q72,82.3 64,82.3 L16,82.3 Q5.3,82.3 5.3,70 L6,60.5 L24,10 Q26,5.6 30,5.6 Z"/><g fill="#fff"><path d="M37,18.4 L67.5,18.4 Q69,18.4 68.5,20 L67.5,23.5 Q67,24.8 65.5,24.8 L35,24.8 Q33.8,24.8 34.2,23.5 L35.2,20 Q35.7,18.4 37,18.4 Z"/><path d="M33,31.3 L63.5,31.3 Q65,31.3 64.6,32.9 L63.6,36.3 Q63.2,37.6 61.7,37.6 L31.2,37.6 Q30,37.6 30.3,36.3 L31.3,32.9 Q31.7,31.3 33,31.3 Z"/></g></svg>
<svg style="position:absolute;left:2164px;top:818px" width="86" height="66" viewBox="0 0 86 66"><rect x="6.5" y="6.5" width="73" height="53" rx="6" fill="none" stroke="#1a96c0" stroke-width="6"/><rect x="6" y="18.1" width="74" height="8.8" fill="#1a96c0"/><rect x="15.3" y="46" width="18.7" height="5.7" rx="2.8" fill="#1a96c0"/><circle cx="54.1" cy="44.2" r="7.3" fill="#1a96c0"/><circle cx="63.2" cy="44.2" r="7.3" fill="#1a96c0"/></svg>
<div style="position:absolute;left:2524px;top:400px;width:502px;height:574px;background:#fff;border:2px solid #e2e6e8;border-radius:6px"></div>
<div class="t" style="left:2553.40px;top:431.45px;font-size:29.00px;font-weight:bold;color:#37444e;"><span id="t40" style="transform:scaleX(0.8903);transform-origin:0 0">SIE SIND ANGEMELDET ALS</span></div>
<div class="t" style="left:2553.40px;top:490.90px;font-size:30.00px;font-weight:bold;color:#4b5660;"><span id="t41" style="transform:scaleX(0.8655);transform-origin:0 0">Ihre Kundennummer:</span></div>
<div class="t" style="left:2553.40px;top:534.00px;font-size:30.00px;font-weight:normal;color:#4b5660;"><span id="t42" style="transform:scaleX(0.9486);transform-origin:0 0">320000</span></div>
<div class="t" style="left:2553.40px;top:578.31px;font-size:30.00px;font-weight:bold;color:#4b5660;"><span id="t43" style="transform:scaleX(0.8751);transform-origin:0 0">Ihre E-Mail-Adresse:</span></div>
<div style="position:absolute;left:2555px;top:613.4px;width:21px;height:28.2px;background:rgb(228,229,231)"></div>
<div style="position:absolute;left:2576px;top:613.4px;width:28px;height:28.2px;background:rgb(222,223,225)"></div>
<div style="position:absolute;left:2604px;top:613.4px;width:28px;height:28.2px;background:rgb(218,219,221)"></div>
<div style="position:absolute;left:2632px;top:613.4px;width:28px;height:28.2px;background:rgb(222,223,225)"></div>
<div style="position:absolute;left:2660px;top:613.4px;width:28px;height:28.2px;background:rgb(222,223,225)"></div>
<div style="position:absolute;left:2688px;top:613.4px;width:28px;height:28.2px;background:rgb(224,225,227)"></div>
<div style="position:absolute;left:2716px;top:613.4px;width:28px;height:28.2px;background:rgb(222,223,225)"></div>
<div style="position:absolute;left:2744px;top:613.4px;width:28px;height:28.2px;background:rgb(245,246,248)"></div>
<div style="position:absolute;left:2555px;top:641.4px;width:21px;height:28.2px;background:rgb(243,244,246)"></div>
<div style="position:absolute;left:2576px;top:641.4px;width:28px;height:28.2px;background:rgb(226,227,229)"></div>
<div style="position:absolute;left:2604px;top:641.4px;width:28px;height:28.2px;background:rgb(226,227,229)"></div>
<div style="position:absolute;left:2632px;top:641.4px;width:28px;height:28.2px;background:rgb(226,227,229)"></div>
<div style="position:absolute;left:2660px;top:641.4px;width:28px;height:28.2px;background:rgb(226,227,229)"></div>
<div style="position:absolute;left:2688px;top:641.4px;width:28px;height:28.2px;background:rgb(230,231,233)"></div>
<div style="position:absolute;left:2716px;top:641.4px;width:28px;height:28.2px;background:rgb(228,229,231)"></div>
<div style="position:absolute;left:2744px;top:641.4px;width:28px;height:28.2px;background:rgb(247,248,250)"></div>
<div style="position:absolute;left:2555px;top:669.4px;width:21px;height:28.2px;background:rgb(242,243,245)"></div>
<div style="position:absolute;left:2576px;top:669.4px;width:28px;height:28.2px;background:rgb(247,248,250)"></div>
<div style="position:absolute;left:2604px;top:669.4px;width:28px;height:28.2px;background:rgb(246,247,249)"></div>
<div style="position:absolute;left:2632px;top:669.4px;width:28px;height:28.2px;background:rgb(244,245,247)"></div>
<div style="position:absolute;left:2660px;top:669.4px;width:28px;height:28.2px;background:rgb(244,245,247)"></div>
<div style="position:absolute;left:2688px;top:669.4px;width:28px;height:28.2px;background:rgb(245,246,248)"></div>
<div style="position:absolute;left:2716px;top:669.4px;width:28px;height:28.2px;background:rgb(244,245,247)"></div>
<div style="position:absolute;left:2744px;top:669.4px;width:28px;height:28.2px;background:rgb(242,243,245)"></div>
<div style="position:absolute;left:2772px;top:669.4px;width:28px;height:28.2px;background:rgb(250,251,253)"></div>
<div style="position:absolute;left:2555px;top:697.4px;width:21px;height:28.2px;background:rgb(220,221,223)"></div>
<div style="position:absolute;left:2576px;top:697.4px;width:28px;height:28.2px;background:rgb(214,215,217)"></div>
<div style="position:absolute;left:2604px;top:697.4px;width:28px;height:28.2px;background:rgb(222,223,225)"></div>
<div style="position:absolute;left:2632px;top:697.4px;width:28px;height:28.2px;background:rgb(224,225,227)"></div>
<div style="position:absolute;left:2660px;top:697.4px;width:28px;height:28.2px;background:rgb(218,219,221)"></div>
<div style="position:absolute;left:2688px;top:697.4px;width:28px;height:28.2px;background:rgb(222,223,225)"></div>
<div style="position:absolute;left:2716px;top:697.4px;width:28px;height:28.2px;background:rgb(210,211,213)"></div>
<div style="position:absolute;left:2744px;top:697.4px;width:28px;height:28.2px;background:rgb(206,207,209)"></div>
<div style="position:absolute;left:2772px;top:697.4px;width:28px;height:28.2px;background:rgb(250,251,253)"></div>
<div style="position:absolute;left:2555px;top:725.4px;width:21px;height:28.2px;background:rgb(224,225,227)"></div>
<div style="position:absolute;left:2576px;top:725.4px;width:28px;height:28.2px;background:rgb(220,221,223)"></div>
<div style="position:absolute;left:2604px;top:725.4px;width:28px;height:28.2px;background:rgb(218,219,221)"></div>
<div style="position:absolute;left:2632px;top:725.4px;width:28px;height:28.2px;background:rgb(226,227,229)"></div>
<div style="position:absolute;left:2660px;top:725.4px;width:28px;height:28.2px;background:rgb(226,227,229)"></div>
<div style="position:absolute;left:2688px;top:725.4px;width:28px;height:28.2px;background:rgb(218,219,221)"></div>
<div style="position:absolute;left:2716px;top:725.4px;width:28px;height:28.2px;background:rgb(232,233,235)"></div>
<div style="position:absolute;left:2555px;top:753.4px;width:21px;height:28.2px;background:rgb(228,229,231)"></div>
<div style="position:absolute;left:2576px;top:753.4px;width:28px;height:28.2px;background:rgb(220,221,223)"></div>
<div style="position:absolute;left:2604px;top:753.4px;width:28px;height:28.2px;background:rgb(224,225,227)"></div>
<div style="position:absolute;left:2632px;top:753.4px;width:28px;height:28.2px;background:rgb(232,233,235)"></div>
<div style="position:absolute;left:2660px;top:753.4px;width:28px;height:28.2px;background:rgb(232,233,235)"></div>
<div style="position:absolute;left:2688px;top:753.4px;width:28px;height:28.2px;background:rgb(228,229,231)"></div>
<div style="position:absolute;left:2716px;top:753.4px;width:28px;height:28.2px;background:rgb(232,233,235)"></div>
<div style="position:absolute;left:2555px;top:781.4px;width:21px;height:28.2px;background:rgb(222,223,225)"></div>
<div style="position:absolute;left:2576px;top:781.4px;width:28px;height:28.2px;background:rgb(214,215,217)"></div>
<div style="position:absolute;left:2604px;top:781.4px;width:28px;height:28.2px;background:rgb(222,223,225)"></div>
<div style="position:absolute;left:2632px;top:781.4px;width:28px;height:28.2px;background:rgb(216,217,219)"></div>
<div style="position:absolute;left:2660px;top:781.4px;width:28px;height:28.2px;background:rgb(216,217,219)"></div>
<div style="position:absolute;left:2688px;top:781.4px;width:28px;height:28.2px;background:rgb(235,236,238)"></div>
<div style="position:absolute;left:2716px;top:781.4px;width:28px;height:28.2px;background:rgb(220,221,223)"></div>
<div style="position:absolute;left:2555px;top:809.4px;width:21px;height:28.2px;background:rgb(226,227,229)"></div>
<div style="position:absolute;left:2576px;top:809.4px;width:28px;height:28.2px;background:rgb(222,223,225)"></div>
<div style="position:absolute;left:2604px;top:809.4px;width:28px;height:28.2px;background:rgb(224,225,227)"></div>
<div style="position:absolute;left:2632px;top:809.4px;width:28px;height:28.2px;background:rgb(226,227,229)"></div>
<div style="position:absolute;left:2660px;top:809.4px;width:28px;height:28.2px;background:rgb(226,227,229)"></div>
<div style="position:absolute;left:2688px;top:809.4px;width:28px;height:28.2px;background:rgb(226,227,229)"></div>
<div style="position:absolute;left:2716px;top:809.4px;width:28px;height:28.2px;background:rgb(228,229,231)"></div>
<div style="position:absolute;left:2744px;top:809.4px;width:28px;height:28.2px;background:rgb(228,229,231)"></div>
<div style="position:absolute;left:2555px;top:837.4px;width:21px;height:28.2px;background:rgb(232,233,235)"></div>
<div style="position:absolute;left:2576px;top:837.4px;width:28px;height:28.2px;background:rgb(232,233,235)"></div>
<div style="position:absolute;left:2604px;top:837.4px;width:28px;height:28.2px;background:rgb(234,235,237)"></div>
<div style="position:absolute;left:2632px;top:837.4px;width:28px;height:28.2px;background:rgb(232,233,235)"></div>
<div style="position:absolute;left:2660px;top:837.4px;width:28px;height:28.2px;background:rgb(232,233,235)"></div>
<div style="position:absolute;left:2688px;top:837.4px;width:28px;height:28.2px;background:rgb(232,233,235)"></div>
<div style="position:absolute;left:2716px;top:837.4px;width:28px;height:28.2px;background:rgb(228,229,231)"></div>
<div style="position:absolute;left:2744px;top:837.4px;width:28px;height:28.2px;background:rgb(230,231,233)"></div>
<svg style="position:absolute;left:2561px;top:892px" width="14" height="22" viewBox="0 0 14 22"><path d="M5,6.5 L11,12.5 L5,18.5" fill="none" stroke="#1a96c0" stroke-width="2"/></svg>
<div class="t" style="left:2580.40px;top:889.99px;font-size:26.00px;font-weight:bold;color:#1a96c0;"><span id="t44" style="transform:scaleX(0.8472);transform-origin:0 0">ABMELDEN</span></div>
<div style="position:absolute;left:2524px;top:1042px;width:502px;height:270px;background:#fff;border:2px solid #e2e6e8;border-radius:6px"></div>
<div class="t" style="left:2553.80px;top:1072.77px;font-size:29.80px;font-weight:bold;color:#37444e;"><span id="t45" style="transform:scaleX(0.8587);transform-origin:0 0">QUICKLINKS</span></div>
<svg style="position:absolute;left:2562px;top:1137.7px" width="14" height="22" viewBox="0 0 14 22"><path d="M5,7 L11.3,13 L5,19" fill="none" stroke="#1a96c0" stroke-width="2"/></svg>
<div class="t" style="left:2580.00px;top:1136.28px;font-size:25.30px;font-weight:bold;color:#1a96c0;"><span id="t46" style="transform:scaleX(0.8684);transform-origin:0 0">RECHNUNGEN EINSEHEN</span></div>
<svg style="position:absolute;left:2562px;top:1183.3500000000001px" width="14" height="22" viewBox="0 0 14 22"><path d="M5,7 L11.3,13 L5,19" fill="none" stroke="#1a96c0" stroke-width="2"/></svg>
<div class="t" style="left:2580.00px;top:1181.93px;font-size:25.30px;font-weight:bold;color:#1a96c0;"><span id="t47" style="transform:scaleX(0.8701);transform-origin:0 0">ZUGANG ÄNDERN</span></div>
<svg style="position:absolute;left:2562px;top:1229.0px" width="14" height="22" viewBox="0 0 14 22"><path d="M5,7 L11.3,13 L5,19" fill="none" stroke="#1a96c0" stroke-width="2"/></svg>
<div class="t" style="left:2580.00px;top:1227.58px;font-size:25.30px;font-weight:bold;color:#1a96c0;"><span id="t48" style="transform:scaleX(0.8653);transform-origin:0 0">SPRACHE ÄNDERN</span></div>
<div style="position:absolute;left:812px;top:1322px;width:1644px;height:520px;background:#fff;border:2px solid #e2e6e8;border-radius:6px;overflow:hidden">
<div style="position:absolute;left:0;top:0;width:100%;height:118px;background:#f5f6f6"></div>
<div style="position:absolute;left:0;top:116px;width:100%;height:2px;background:#d6dfe3"></div>
<div style="position:absolute;left:0;top:118px;width:100%;height:105px;background:#f6f6f6"></div>
<div style="position:absolute;left:0;top:222px;width:100%;height:2px;background:#d9e2e6"></div>
<div style="position:absolute;left:0;top:224px;width:100%;height:78px;background:#fafafa"></div>
<div style="position:absolute;left:0;top:302px;width:100%;height:2px;background:#d9e2e6"></div>
<div style="position:absolute;left:0;top:304px;width:100%;height:78px;background:#ffffff"></div>
<div style="position:absolute;left:0;top:382px;width:100%;height:2px;background:#d9e2e6"></div>
<div style="position:absolute;left:0;top:384px;width:100%;height:79px;background:#fafafa"></div>
<div style="position:absolute;left:0;top:462px;width:100%;height:3px;background:#d5dee3"></div>
<div style="position:absolute;left:0;top:465px;width:100%;height:60px;background:linear-gradient(rgba(0,0,0,0.01), rgba(0,0,0,0.05) 20px, rgba(0,0,0,0.085) 40px, rgba(0,0,0,0.09));-webkit-mask-image:linear-gradient(to right, transparent 170px, rgba(0,0,0,0.6) 290px, black 420px, black 1300px, rgba(0,0,0,0.6) 1400px, transparent 1530px)"></div>
</div>
<svg style="position:absolute;left:858px;top:1366px" width="28" height="32" viewBox="0 0 28 32"><g fill="none" stroke="#37444e" stroke-width="2"><path d="M2.5,2.3 L17.5,2.3 L25.5,10 L25.5,28.8 L2.5,28.8 Z"/><path d="M17.5,2.3 L17.5,10 L25.5,10"/></g><g fill="#37444e"><rect x="7" y="14.5" width="14" height="1.8"/><rect x="7" y="18.8" width="14" height="1.8"/><rect x="7" y="23" width="14" height="1.8"/></g></svg>
<div class="t" style="left:896.70px;top:1367.18px;font-size:30.50px;font-weight:bold;color:#37444e;"><span id="t49" style="transform:scaleX(0.8512);transform-origin:0 0">MEINE LETZTEN RECHNUNGEN</span></div>
<div class="t" style="left:837.70px;top:1479.65px;font-size:29.00px;font-weight:bold;color:#37444e;"><span id="t50" style="transform:scaleX(0.9110);transform-origin:0 0">DATUM</span></div>
<div class="t" style="left:1099.00px;top:1479.65px;font-size:29.00px;font-weight:bold;color:#37444e;"><span id="t51" style="transform:scaleX(0.8907);transform-origin:0 0">RECHNUNGS-NR.</span></div>
<div class="t" style="left:1429.00px;top:1479.65px;font-size:29.00px;font-weight:bold;color:#37444e;"><span id="t52" style="transform:scaleX(0.9102);transform-origin:0 0">STATUS</span></div>
<div class="t" style="left:1637.60px;top:1479.65px;font-size:29.00px;font-weight:bold;color:#37444e;"><span id="t53" style="transform:scaleX(0.8987);transform-origin:0 0">GEZAHLT/STORNIERT</span></div>
<div class="t" style="left:2443.90px;top:1479.65px;width:0;font-size:29.00px;font-weight:bold;color:#37444e;"><span id="t54" style="transform:scaleX(0.8941) translateX(-100%);transform-origin:0 0">DOKUMENTE</span></div>
<div class="t" style="left:1429.00px;top:1570.90px;font-size:30.00px;font-weight:normal;color:#2cb24a;"><span id="t55" style="transform:scaleX(0.9339);transform-origin:0 0">bezahlt</span></div>
<div class="t" style="left:1637.60px;top:1571.33px;font-size:29.50px;font-weight:normal;color:#6f7880;"><span id="t56" style="transform:scaleX(0.9473);transform-origin:0 0">10.07.2018</span></div>
<div style="position:absolute;left:2202px;top:1566.4px;width:240px;height:41px;border:1px solid #d7dde0;border-radius:3px;background:linear-gradient(#ffffff,#f3f5f6)"></div>
<div class="t" style="left:2214.00px;top:1574.29px;font-size:26.00px;font-weight:bold;color:#1a96c0;"><span id="t57" style="transform:scaleX(0.8342);transform-origin:0 0">HERUNTERLADEN</span></div>
<svg style="position:absolute;left:2415px;top:1584.3px" width="18" height="10" viewBox="0 0 18 10"><path d="M1.5,1.5 L16.5,1.5 L9,8.7 Z" fill="#1a96c0"/></svg>
<div class="t" style="left:1429.00px;top:1650.61px;font-size:30.00px;font-weight:normal;color:#2cb24a;"><span id="t58" style="transform:scaleX(0.9339);transform-origin:0 0">bezahlt</span></div>
<div class="t" style="left:1637.60px;top:1651.03px;font-size:29.50px;font-weight:normal;color:#6f7880;"><span id="t59" style="transform:scaleX(0.9473);transform-origin:0 0">09.07.2018</span></div>
<div style="position:absolute;left:2202px;top:1646.7px;width:240px;height:41px;border:1px solid #d7dde0;border-radius:3px;background:linear-gradient(#ffffff,#f3f5f6)"></div>
<div class="t" style="left:2214.00px;top:1653.99px;font-size:26.00px;font-weight:bold;color:#1a96c0;"><span id="t60" style="transform:scaleX(0.8342);transform-origin:0 0">HERUNTERLADEN</span></div>
<svg style="position:absolute;left:2415px;top:1664px" width="18" height="10" viewBox="0 0 18 10"><path d="M1.5,1.5 L16.5,1.5 L9,8.7 Z" fill="#1a96c0"/></svg>
<div class="t" style="left:1429.00px;top:1731.11px;font-size:30.00px;font-weight:normal;color:#ee1d25;"><span id="t61" style="transform:scaleX(0.9990);transform-origin:0 0">offen</span></div>
<div style="position:absolute;left:2202px;top:1727.0px;width:240px;height:41px;border:1px solid #d7dde0;border-radius:3px;background:linear-gradient(#ffffff,#f3f5f6)"></div>
<div class="t" style="left:2214.00px;top:1734.49px;font-size:26.00px;font-weight:bold;color:#1a96c0;"><span id="t62" style="transform:scaleX(0.8342);transform-origin:0 0">HERUNTERLADEN</span></div>
<svg style="position:absolute;left:2415px;top:1744.5px" width="18" height="10" viewBox="0 0 18 10"><path d="M1.5,1.5 L16.5,1.5 L9,8.7 Z" fill="#1a96c0"/></svg>
<div style="position:absolute;left:1638px;top:1727px;width:240px;height:41px;border:1px solid #d7dde0;border-radius:3px;background:linear-gradient(#ffffff,#f3f5f6)"></div>
<div class="t" style="left:1649.60px;top:1734.49px;font-size:26.00px;font-weight:bold;color:#1a96c0;"><span id="t63" style="transform:scaleX(0.8590);transform-origin:0 0">JETZT BEZAHLEN</span></div>
<svg style="position:absolute;left:1851px;top:1744.5px" width="18" height="10" viewBox="0 0 18 10"><path d="M1.5,1.5 L16.5,1.5 L9,8.7 Z" fill="#1a96c0"/></svg>
<div style="position:absolute;left:831.7px;top:1563.6px;width:458.1px;height:1.7px;background:#f6f6f6"></div>
<div style="position:absolute;left:831.7px;top:1565.3px;width:7.8px;height:28.0px;background:rgb(245,245,248)"></div>
<div style="position:absolute;left:839.5px;top:1565.3px;width:28.0px;height:28.0px;background:rgb(220,220,223)"></div>
<div style="position:absolute;left:867.5px;top:1565.3px;width:28.0px;height:28.0px;background:rgb(223,223,226)"></div>
<div style="position:absolute;left:895.5px;top:1565.3px;width:28.0px;height:28.0px;background:rgb(226,226,229)"></div>
<div style="position:absolute;left:923.5px;top:1565.3px;width:28.0px;height:28.0px;background:rgb(218,218,221)"></div>
<div style="position:absolute;left:951.5px;top:1565.3px;width:28.0px;height:28.0px;background:rgb(223,223,226)"></div>
<div style="position:absolute;left:979.5px;top:1565.3px;width:28.0px;height:28.0px;background:rgb(249,249,252)"></div>
<div style="position:absolute;left:1007.5px;top:1565.3px;width:28.0px;height:28.0px;background:rgb(253,253,255)"></div>
<div style="position:absolute;left:1035.5px;top:1565.3px;width:28.0px;height:28.0px;background:rgb(254,254,255)"></div>
<div style="position:absolute;left:1063.5px;top:1565.3px;width:28.0px;height:28.0px;background:rgb(252,252,255)"></div>
<div style="position:absolute;left:1091.5px;top:1565.3px;width:28.0px;height:28.0px;background:rgb(220,220,223)"></div>
<div style="position:absolute;left:1119.5px;top:1565.3px;width:28.0px;height:28.0px;background:rgb(211,211,214)"></div>
<div style="position:absolute;left:1147.5px;top:1565.3px;width:28.0px;height:28.0px;background:rgb(220,220,223)"></div>
<div style="position:absolute;left:1175.5px;top:1565.3px;width:28.0px;height:28.0px;background:rgb(215,215,218)"></div>
<div style="position:absolute;left:1203.5px;top:1565.3px;width:28.0px;height:28.0px;background:rgb(225,225,228)"></div>
<div style="position:absolute;left:1231.5px;top:1565.3px;width:28.0px;height:28.0px;background:rgb(251,251,254)"></div>
<div style="position:absolute;left:1259.5px;top:1565.3px;width:28.0px;height:28.0px;background:rgb(249,249,252)"></div>
<div style="position:absolute;left:1287.5px;top:1565.3px;width:2.3px;height:28.0px;background:rgb(249,249,252)"></div>
<div style="position:absolute;left:831.7px;top:1593.3px;width:7.8px;height:28.0px;background:rgb(248,248,251)"></div>
<div style="position:absolute;left:839.5px;top:1593.3px;width:28.0px;height:28.0px;background:rgb(241,241,244)"></div>
<div style="position:absolute;left:867.5px;top:1593.3px;width:28.0px;height:28.0px;background:rgb(238,238,241)"></div>
<div style="position:absolute;left:895.5px;top:1593.3px;width:28.0px;height:28.0px;background:rgb(240,240,243)"></div>
<div style="position:absolute;left:923.5px;top:1593.3px;width:28.0px;height:28.0px;background:rgb(238,238,241)"></div>
<div style="position:absolute;left:951.5px;top:1593.3px;width:28.0px;height:28.0px;background:rgb(240,240,243)"></div>
<div style="position:absolute;left:979.5px;top:1593.3px;width:28.0px;height:28.0px;background:rgb(249,249,252)"></div>
<div style="position:absolute;left:1007.5px;top:1593.3px;width:28.0px;height:28.0px;background:rgb(250,250,253)"></div>
<div style="position:absolute;left:1035.5px;top:1593.3px;width:28.0px;height:28.0px;background:rgb(250,250,253)"></div>
<div style="position:absolute;left:1063.5px;top:1593.3px;width:28.0px;height:28.0px;background:rgb(250,250,253)"></div>
<div style="position:absolute;left:1091.5px;top:1593.3px;width:28.0px;height:28.0px;background:rgb(244,244,247)"></div>
<div style="position:absolute;left:1119.5px;top:1593.3px;width:28.0px;height:28.0px;background:rgb(238,238,241)"></div>
<div style="position:absolute;left:1147.5px;top:1593.3px;width:28.0px;height:28.0px;background:rgb(239,239,242)"></div>
<div style="position:absolute;left:1175.5px;top:1593.3px;width:28.0px;height:28.0px;background:rgb(241,241,244)"></div>
<div style="position:absolute;left:1203.5px;top:1593.3px;width:28.0px;height:28.0px;background:rgb(244,244,247)"></div>
<div style="position:absolute;left:1231.5px;top:1593.3px;width:28.0px;height:28.0px;background:rgb(249,249,252)"></div>
<div style="position:absolute;left:1259.5px;top:1593.3px;width:28.0px;height:28.0px;background:rgb(249,249,252)"></div>
<div style="position:absolute;left:1287.5px;top:1593.3px;width:2.3px;height:28.0px;background:rgb(249,249,252)"></div>
<div style="position:absolute;left:831.7px;top:1621.3px;width:7.8px;height:28.0px;background:rgb(250,250,253)"></div>
<div style="position:absolute;left:839.5px;top:1621.3px;width:28.0px;height:28.0px;background:rgb(252,252,255)"></div>
<div style="position:absolute;left:867.5px;top:1621.3px;width:28.0px;height:28.0px;background:rgb(252,252,255)"></div>
<div style="position:absolute;left:895.5px;top:1621.3px;width:28.0px;height:28.0px;background:rgb(252,252,255)"></div>
<div style="position:absolute;left:923.5px;top:1621.3px;width:28.0px;height:28.0px;background:rgb(252,252,255)"></div>
<div style="position:absolute;left:951.5px;top:1621.3px;width:28.0px;height:28.0px;background:rgb(252,252,255)"></div>
<div style="position:absolute;left:979.5px;top:1621.3px;width:28.0px;height:28.0px;background:rgb(252,252,255)"></div>
<div style="position:absolute;left:1007.5px;top:1621.3px;width:28.0px;height:28.0px;background:rgb(253,253,255)"></div>
<div style="position:absolute;left:1035.5px;top:1621.3px;width:28.0px;height:28.0px;background:rgb(253,253,255)"></div>
<div style="position:absolute;left:1063.5px;top:1621.3px;width:28.0px;height:28.0px;background:rgb(252,252,255)"></div>
<div style="position:absolute;left:1091.5px;top:1621.3px;width:28.0px;height:28.0px;background:rgb(251,251,254)"></div>
<div style="position:absolute;left:1119.5px;top:1621.3px;width:28.0px;height:28.0px;background:rgb(251,251,254)"></div>
<div style="position:absolute;left:1147.5px;top:1621.3px;width:28.0px;height:28.0px;background:rgb(251,251,254)"></div>
<div style="position:absolute;left:1175.5px;top:1621.3px;width:28.0px;height:28.0px;background:rgb(251,251,254)"></div>
<div style="position:absolute;left:1203.5px;top:1621.3px;width:28.0px;height:28.0px;background:rgb(251,251,254)"></div>
<div style="position:absolute;left:1231.5px;top:1621.3px;width:28.0px;height:28.0px;background:rgb(250,250,253)"></div>
<div style="position:absolute;left:1259.5px;top:1621.3px;width:28.0px;height:28.0px;background:rgb(250,250,253)"></div>
<div style="position:absolute;left:1287.5px;top:1621.3px;width:2.3px;height:28.0px;background:rgb(250,250,253)"></div>
<div style="position:absolute;left:831.7px;top:1649.3px;width:7.8px;height:28.0px;background:rgb(245,245,248)"></div>
<div style="position:absolute;left:839.5px;top:1649.3px;width:28.0px;height:28.0px;background:rgb(220,220,223)"></div>
<div style="position:absolute;left:867.5px;top:1649.3px;width:28.0px;height:28.0px;background:rgb(223,223,226)"></div>
<div style="position:absolute;left:895.5px;top:1649.3px;width:28.0px;height:28.0px;background:rgb(226,226,229)"></div>
<div style="position:absolute;left:923.5px;top:1649.3px;width:28.0px;height:28.0px;background:rgb(218,218,221)"></div>
<div style="position:absolute;left:951.5px;top:1649.3px;width:28.0px;height:28.0px;background:rgb(223,223,226)"></div>
<div style="position:absolute;left:979.5px;top:1649.3px;width:28.0px;height:28.0px;background:rgb(249,249,252)"></div>
<div style="position:absolute;left:1007.5px;top:1649.3px;width:28.0px;height:28.0px;background:rgb(253,253,255)"></div>
<div style="position:absolute;left:1035.5px;top:1649.3px;width:28.0px;height:28.0px;background:rgb(254,254,255)"></div>
<div style="position:absolute;left:1063.5px;top:1649.3px;width:28.0px;height:28.0px;background:rgb(252,252,255)"></div>
<div style="position:absolute;left:1091.5px;top:1649.3px;width:28.0px;height:28.0px;background:rgb(220,220,223)"></div>
<div style="position:absolute;left:1119.5px;top:1649.3px;width:28.0px;height:28.0px;background:rgb(211,211,214)"></div>
<div style="position:absolute;left:1147.5px;top:1649.3px;width:28.0px;height:28.0px;background:rgb(220,220,223)"></div>
<div style="position:absolute;left:1175.5px;top:1649.3px;width:28.0px;height:28.0px;background:rgb(215,215,218)"></div>
<div style="position:absolute;left:1203.5px;top:1649.3px;width:28.0px;height:28.0px;background:rgb(225,225,228)"></div>
<div style="position:absolute;left:1231.5px;top:1649.3px;width:28.0px;height:28.0px;background:rgb(251,251,254)"></div>
<div style="position:absolute;left:1259.5px;top:1649.3px;width:28.0px;height:28.0px;background:rgb(249,249,252)"></div>
<div style="position:absolute;left:1287.5px;top:1649.3px;width:2.3px;height:28.0px;background:rgb(249,249,252)"></div>
<div style="position:absolute;left:831.7px;top:1677.3px;width:7.8px;height:28.0px;background:rgb(248,248,251)"></div>
<div style="position:absolute;left:839.5px;top:1677.3px;width:28.0px;height:28.0px;background:rgb(245,245,248)"></div>
<div style="position:absolute;left:867.5px;top:1677.3px;width:28.0px;height:28.0px;background:rgb(242,242,245)"></div>
<div style="position:absolute;left:895.5px;top:1677.3px;width:28.0px;height:28.0px;background:rgb(244,244,247)"></div>
<div style="position:absolute;left:923.5px;top:1677.3px;width:28.0px;height:28.0px;background:rgb(242,242,245)"></div>
<div style="position:absolute;left:951.5px;top:1677.3px;width:28.0px;height:28.0px;background:rgb(244,244,247)"></div>
<div style="position:absolute;left:979.5px;top:1677.3px;width:28.0px;height:28.0px;background:rgb(249,249,252)"></div>
<div style="position:absolute;left:1007.5px;top:1677.3px;width:28.0px;height:28.0px;background:rgb(250,250,253)"></div>
<div style="position:absolute;left:1035.5px;top:1677.3px;width:28.0px;height:28.0px;background:rgb(250,250,253)"></div>
<div style="position:absolute;left:1063.5px;top:1677.3px;width:28.0px;height:28.0px;background:rgb(250,250,253)"></div>
<div style="position:absolute;left:1091.5px;top:1677.3px;width:28.0px;height:28.0px;background:rgb(248,248,251)"></div>
<div style="position:absolute;left:1119.5px;top:1677.3px;width:28.0px;height:28.0px;background:rgb(242,242,245)"></div>
<div style="position:absolute;left:1147.5px;top:1677.3px;width:28.0px;height:28.0px;background:rgb(243,243,246)"></div>
<div style="position:absolute;left:1175.5px;top:1677.3px;width:28.0px;height:28.0px;background:rgb(245,245,248)"></div>
<div style="position:absolute;left:1203.5px;top:1677.3px;width:28.0px;height:28.0px;background:rgb(248,248,251)"></div>
<div style="position:absolute;left:1231.5px;top:1677.3px;width:28.0px;height:28.0px;background:rgb(249,249,252)"></div>
<div style="position:absolute;left:1259.5px;top:1677.3px;width:28.0px;height:28.0px;background:rgb(249,249,252)"></div>
<div style="position:absolute;left:1287.5px;top:1677.3px;width:2.3px;height:28.0px;background:rgb(249,249,252)"></div>
<div style="position:absolute;left:831.7px;top:1705.3px;width:7.8px;height:28.0px;background:rgb(250,250,253)"></div>
<div style="position:absolute;left:839.5px;top:1705.3px;width:28.0px;height:28.0px;background:rgb(252,252,255)"></div>
<div style="position:absolute;left:867.5px;top:1705.3px;width:28.0px;height:28.0px;background:rgb(252,252,255)"></div>
<div style="position:absolute;left:895.5px;top:1705.3px;width:28.0px;height:28.0px;background:rgb(252,252,255)"></div>
<div style="position:absolute;left:923.5px;top:1705.3px;width:28.0px;height:28.0px;background:rgb(252,252,255)"></div>
<div style="position:absolute;left:951.5px;top:1705.3px;width:28.0px;height:28.0px;background:rgb(252,252,255)"></div>
<div style="position:absolute;left:979.5px;top:1705.3px;width:28.0px;height:28.0px;background:rgb(252,252,255)"></div>
<div style="position:absolute;left:1007.5px;top:1705.3px;width:28.0px;height:28.0px;background:rgb(253,253,255)"></div>
<div style="position:absolute;left:1035.5px;top:1705.3px;width:28.0px;height:28.0px;background:rgb(253,253,255)"></div>
<div style="position:absolute;left:1063.5px;top:1705.3px;width:28.0px;height:28.0px;background:rgb(252,252,255)"></div>
<div style="position:absolute;left:1091.5px;top:1705.3px;width:28.0px;height:28.0px;background:rgb(251,251,254)"></div>
<div style="position:absolute;left:1119.5px;top:1705.3px;width:28.0px;height:28.0px;background:rgb(251,251,254)"></div>
<div style="position:absolute;left:1147.5px;top:1705.3px;width:28.0px;height:28.0px;background:rgb(251,251,254)"></div>
<div style="position:absolute;left:1175.5px;top:1705.3px;width:28.0px;height:28.0px;background:rgb(251,251,254)"></div>
<div style="position:absolute;left:1203.5px;top:1705.3px;width:28.0px;height:28.0px;background:rgb(251,251,254)"></div>
<div style="position:absolute;left:1231.5px;top:1705.3px;width:28.0px;height:28.0px;background:rgb(250,250,253)"></div>
<div style="position:absolute;left:1259.5px;top:1705.3px;width:28.0px;height:28.0px;background:rgb(250,250,253)"></div>
<div style="position:absolute;left:1287.5px;top:1705.3px;width:2.3px;height:28.0px;background:rgb(250,250,253)"></div>
<div style="position:absolute;left:831.7px;top:1733.3px;width:7.8px;height:28.0px;background:rgb(245,245,248)"></div>
<div style="position:absolute;left:839.5px;top:1733.3px;width:28.0px;height:28.0px;background:rgb(220,220,223)"></div>
<div style="position:absolute;left:867.5px;top:1733.3px;width:28.0px;height:28.0px;background:rgb(223,223,226)"></div>
<div style="position:absolute;left:895.5px;top:1733.3px;width:28.0px;height:28.0px;background:rgb(226,226,229)"></div>
<div style="position:absolute;left:923.5px;top:1733.3px;width:28.0px;height:28.0px;background:rgb(218,218,221)"></div>
<div style="position:absolute;left:951.5px;top:1733.3px;width:28.0px;height:28.0px;background:rgb(223,223,226)"></div>
<div style="position:absolute;left:979.5px;top:1733.3px;width:28.0px;height:28.0px;background:rgb(249,249,252)"></div>
<div style="position:absolute;left:1007.5px;top:1733.3px;width:28.0px;height:28.0px;background:rgb(253,253,255)"></div>
<div style="position:absolute;left:1035.5px;top:1733.3px;width:28.0px;height:28.0px;background:rgb(254,254,255)"></div>
<div style="position:absolute;left:1063.5px;top:1733.3px;width:28.0px;height:28.0px;background:rgb(252,252,255)"></div>
<div style="position:absolute;left:1091.5px;top:1733.3px;width:28.0px;height:28.0px;background:rgb(220,220,223)"></div>
<div style="position:absolute;left:1119.5px;top:1733.3px;width:28.0px;height:28.0px;background:rgb(211,211,214)"></div>
<div style="position:absolute;left:1147.5px;top:1733.3px;width:28.0px;height:28.0px;background:rgb(220,220,223)"></div>
<div style="position:absolute;left:1175.5px;top:1733.3px;width:28.0px;height:28.0px;background:rgb(215,215,218)"></div>
<div style="position:absolute;left:1203.5px;top:1733.3px;width:28.0px;height:28.0px;background:rgb(225,225,228)"></div>
<div style="position:absolute;left:1231.5px;top:1733.3px;width:28.0px;height:28.0px;background:rgb(251,251,254)"></div>
<div style="position:absolute;left:1259.5px;top:1733.3px;width:28.0px;height:28.0px;background:rgb(249,249,252)"></div>
<div style="position:absolute;left:1287.5px;top:1733.3px;width:2.3px;height:28.0px;background:rgb(249,249,252)"></div>
<div style="position:absolute;left:831.7px;top:1761.3px;width:7.8px;height:10.0px;background:rgb(242,242,245)"></div>
<div style="position:absolute;left:839.5px;top:1761.3px;width:28.0px;height:10.0px;background:rgb(243,243,246)"></div>
<div style="position:absolute;left:867.5px;top:1761.3px;width:28.0px;height:10.0px;background:rgb(243,243,246)"></div>
<div style="position:absolute;left:895.5px;top:1761.3px;width:28.0px;height:10.0px;background:rgb(243,243,246)"></div>
<div style="position:absolute;left:923.5px;top:1761.3px;width:28.0px;height:10.0px;background:rgb(243,243,246)"></div>
<div style="position:absolute;left:951.5px;top:1761.3px;width:28.0px;height:10.0px;background:rgb(243,243,246)"></div>
<div style="position:absolute;left:979.5px;top:1761.3px;width:28.0px;height:10.0px;background:rgb(244,244,247)"></div>
<div style="position:absolute;left:1007.5px;top:1761.3px;width:28.0px;height:10.0px;background:rgb(245,245,248)"></div>
<div style="position:absolute;left:1035.5px;top:1761.3px;width:28.0px;height:10.0px;background:rgb(245,245,248)"></div>
<div style="position:absolute;left:1063.5px;top:1761.3px;width:28.0px;height:10.0px;background:rgb(244,244,247)"></div>
<div style="position:absolute;left:1091.5px;top:1761.3px;width:28.0px;height:10.0px;background:rgb(243,243,246)"></div>
<div style="position:absolute;left:1119.5px;top:1761.3px;width:28.0px;height:10.0px;background:rgb(243,243,246)"></div>
<div style="position:absolute;left:1147.5px;top:1761.3px;width:28.0px;height:10.0px;background:rgb(243,243,246)"></div>
<div style="position:absolute;left:1175.5px;top:1761.3px;width:28.0px;height:10.0px;background:rgb(243,243,246)"></div>
<div style="position:absolute;left:1203.5px;top:1761.3px;width:28.0px;height:10.0px;background:rgb(243,243,246)"></div>
<div style="position:absolute;left:1231.5px;top:1761.3px;width:28.0px;height:10.0px;background:rgb(244,244,247)"></div>
<div style="position:absolute;left:1259.5px;top:1761.3px;width:28.0px;height:10.0px;background:rgb(244,244,247)"></div>
<div style="position:absolute;left:1287.5px;top:1761.3px;width:2.3px;height:10.0px;background:rgb(244,244,247)"></div>
<div style="position:absolute;left:1000px;top:3px;width:141px;height:153px;border:7px solid #00e200;border-radius:4px"></div>
<svg style="position:absolute;left:1046px;top:170px" width="64" height="84" viewBox="0 0 64 84"><path d="M32.2,4.4 L47.2,17.3 L47.2,33.5 A26,26 0 1 1 16.8,33.5 L16.8,17.3 Z" fill="#00c13c" stroke="#ffffff" stroke-width="2"/>
<circle cx="32.2" cy="53.5" r="18.7" fill="#ffffff" stroke="#d8d8d8" stroke-width="0.8"/>
<path d="M21.5,53.2 L28.6,61 L41.8,46.9" fill="none" stroke="#00c13c" stroke-width="4.2" stroke-linecap="round" stroke-linejoin="round"/></svg>
</body></html>
